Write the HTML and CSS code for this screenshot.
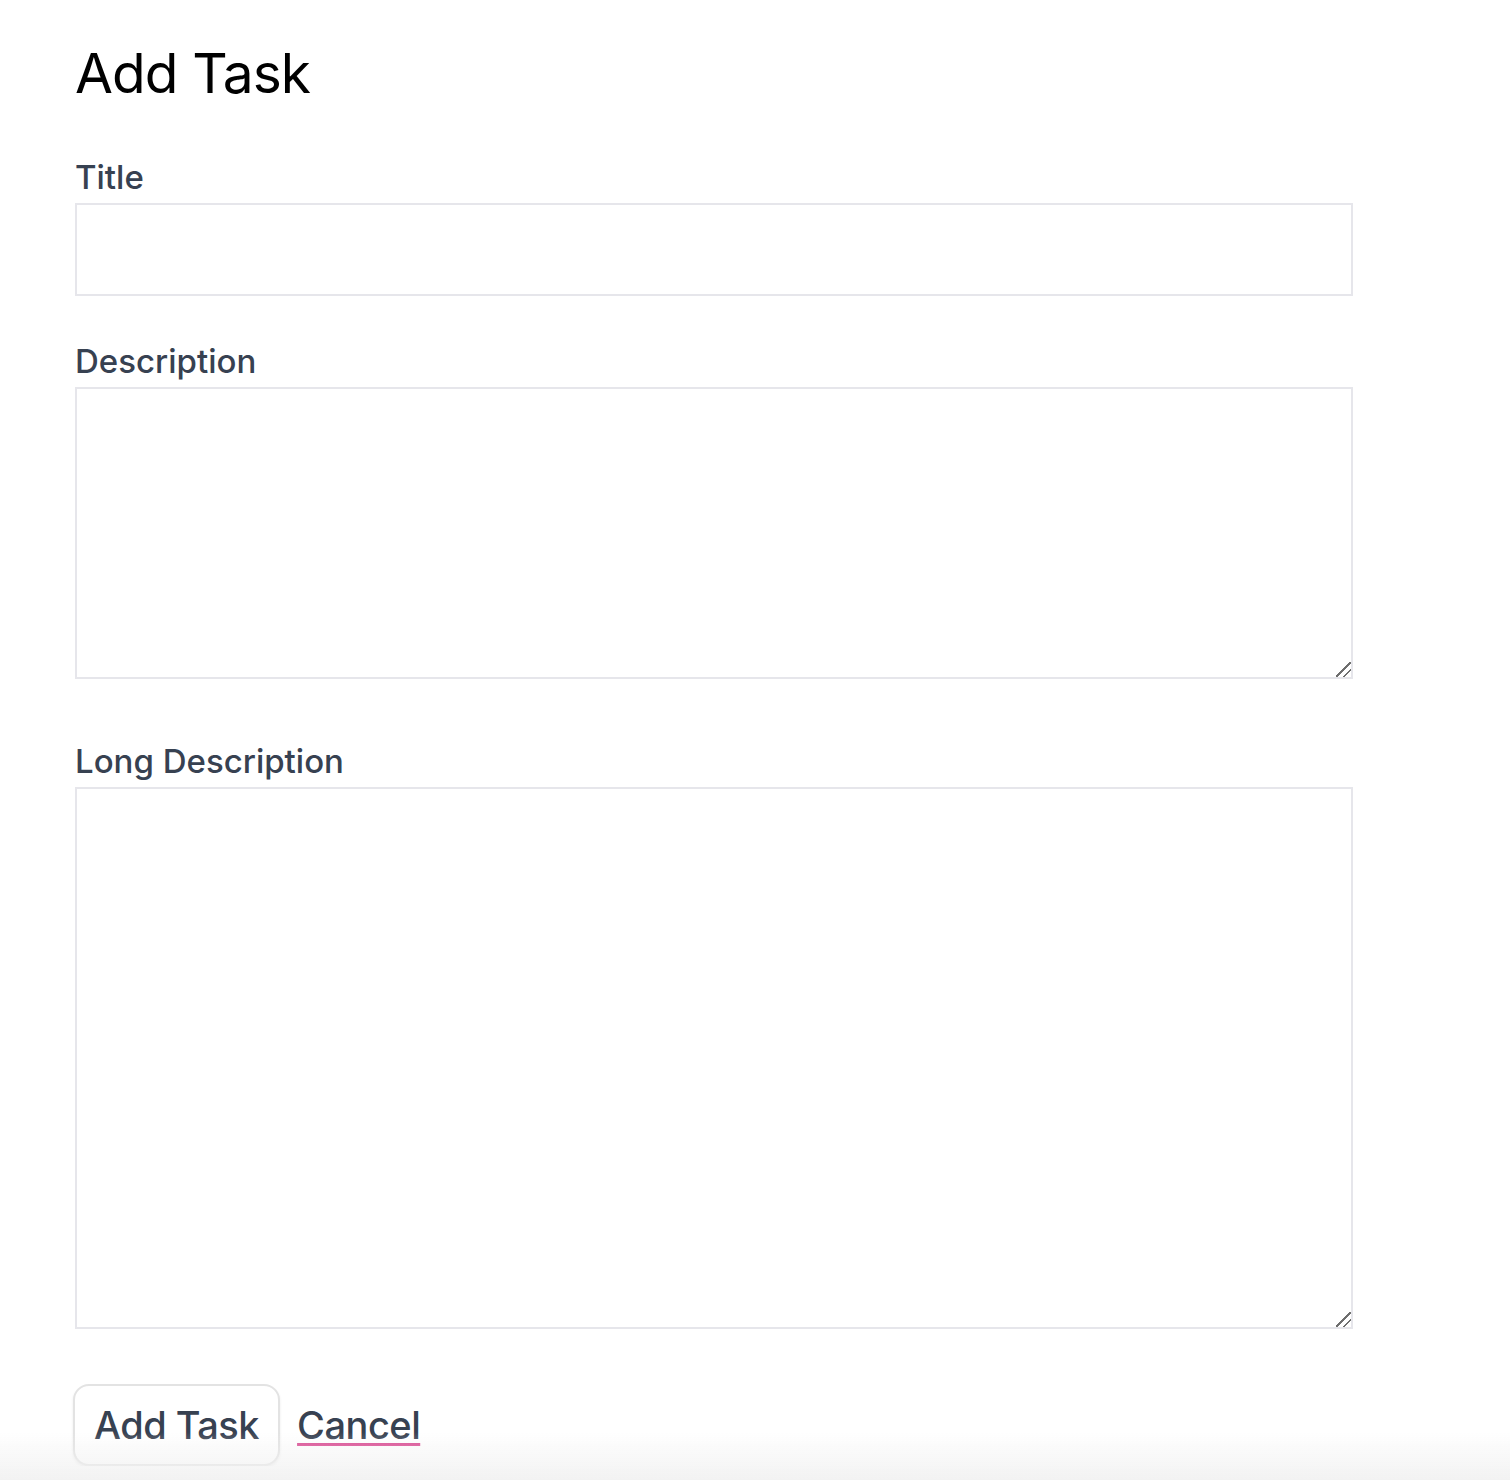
FILE: index.html
```html
<!DOCTYPE html>
<html lang="en">
<head>
<meta charset="utf-8">
<title>Add Task</title>
<link rel="stylesheet" href="styles.css">
</head>
<body>
<main class="page">
  <h1 class="heading">Add Task</h1>
  <form class="task-form">
    <div class="field field-title">
      <label class="label" for="title">Title</label>
      <input class="input" id="title" type="text">
    </div>
    <div class="field field-desc">
      <label class="label" for="desc">Description</label>
      <textarea class="textarea textarea-desc" id="desc"></textarea>
    </div>
    <div class="field field-long">
      <label class="label" for="long">Long Description</label>
      <textarea class="textarea textarea-long" id="long"></textarea>
    </div>
    <div class="actions">
      <button class="btn" type="submit">Add Task</button>
      <a class="cancel" href="#">Cancel</a>
    </div>
  </form>
</main>
<div class="bottom-fade"></div>
</body>
</html>
```
FILE: styles.css
```css
html, body {
  margin: 0;
  padding: 0;
  background: #ffffff;
}
body {
  font-family: Inter, "Liberation Sans", Arial, sans-serif;
}
.page {
  padding: 39px 75px 0 75px;
  width: 1278px;
}
.heading {
  margin: 0;
  font-size: 55px;
  line-height: 68px;
  font-weight: 400;
  color: #000;
  letter-spacing: -0.9px;
}
.task-form {
  margin-top: 50px;
}
.field {
  display: flex;
  flex-direction: column;
}
.field-title { margin-bottom: 45px; }
.field-desc { margin-bottom: 62px; }
.field-long { margin-bottom: 55px; }
.label {
  font-size: 33px;
  line-height: 40px;
  font-weight: 500;
  color: #374151;
  margin-bottom: 6px;
  letter-spacing: 0;
}
.input, .textarea {
  box-sizing: border-box;
  width: 1278px;
  margin: 0;
  border: 2px solid #e6e6eb;
  border-radius: 0;
  background: #fff;
  font-family: inherit;
  font-size: 24px;
  outline: none;
}
.input { height: 93px; padding: 0 16px; }
.textarea { display: block; resize: vertical; padding: 12px 16px; }
.textarea::-webkit-resizer {
  background: linear-gradient(135deg,
    transparent 0 45%, #6e6e6e 45% 54%,
    transparent 54% 71%, #6e6e6e 71% 80%,
    transparent 80%);
}
.textarea-desc { height: 292px; }
.textarea-long { height: 542px; }
.actions {
  display: flex;
  align-items: center;
  gap: 17px;
  margin-left: -2px;
}
.btn {
  box-sizing: border-box;
  height: 82px;
  padding: 0 19px;
  border: 2px solid #e3e3e3;
  border-radius: 16px;
  background: #fff;
  box-shadow: 0 2px 3px rgba(0, 0, 0, 0.08);
  font-family: inherit;
  font-size: 38px;
  font-weight: 500;
  color: #374151;
  letter-spacing: -0.5px;
}
.cancel {
  font-size: 38px;
  font-weight: 500;
  color: #374151;
  text-decoration: underline;
  text-decoration-color: #d9428d;
  text-decoration-thickness: 3px;
  text-underline-offset: 4px;
  letter-spacing: -0.5px;
}
.bottom-fade {
  position: fixed;
  left: 0;
  right: 0;
  bottom: 0;
  height: 48px;
  background: linear-gradient(to bottom, rgba(243, 243, 243, 0), rgba(240, 240, 240, 0.85));
  pointer-events: none;
}
```
